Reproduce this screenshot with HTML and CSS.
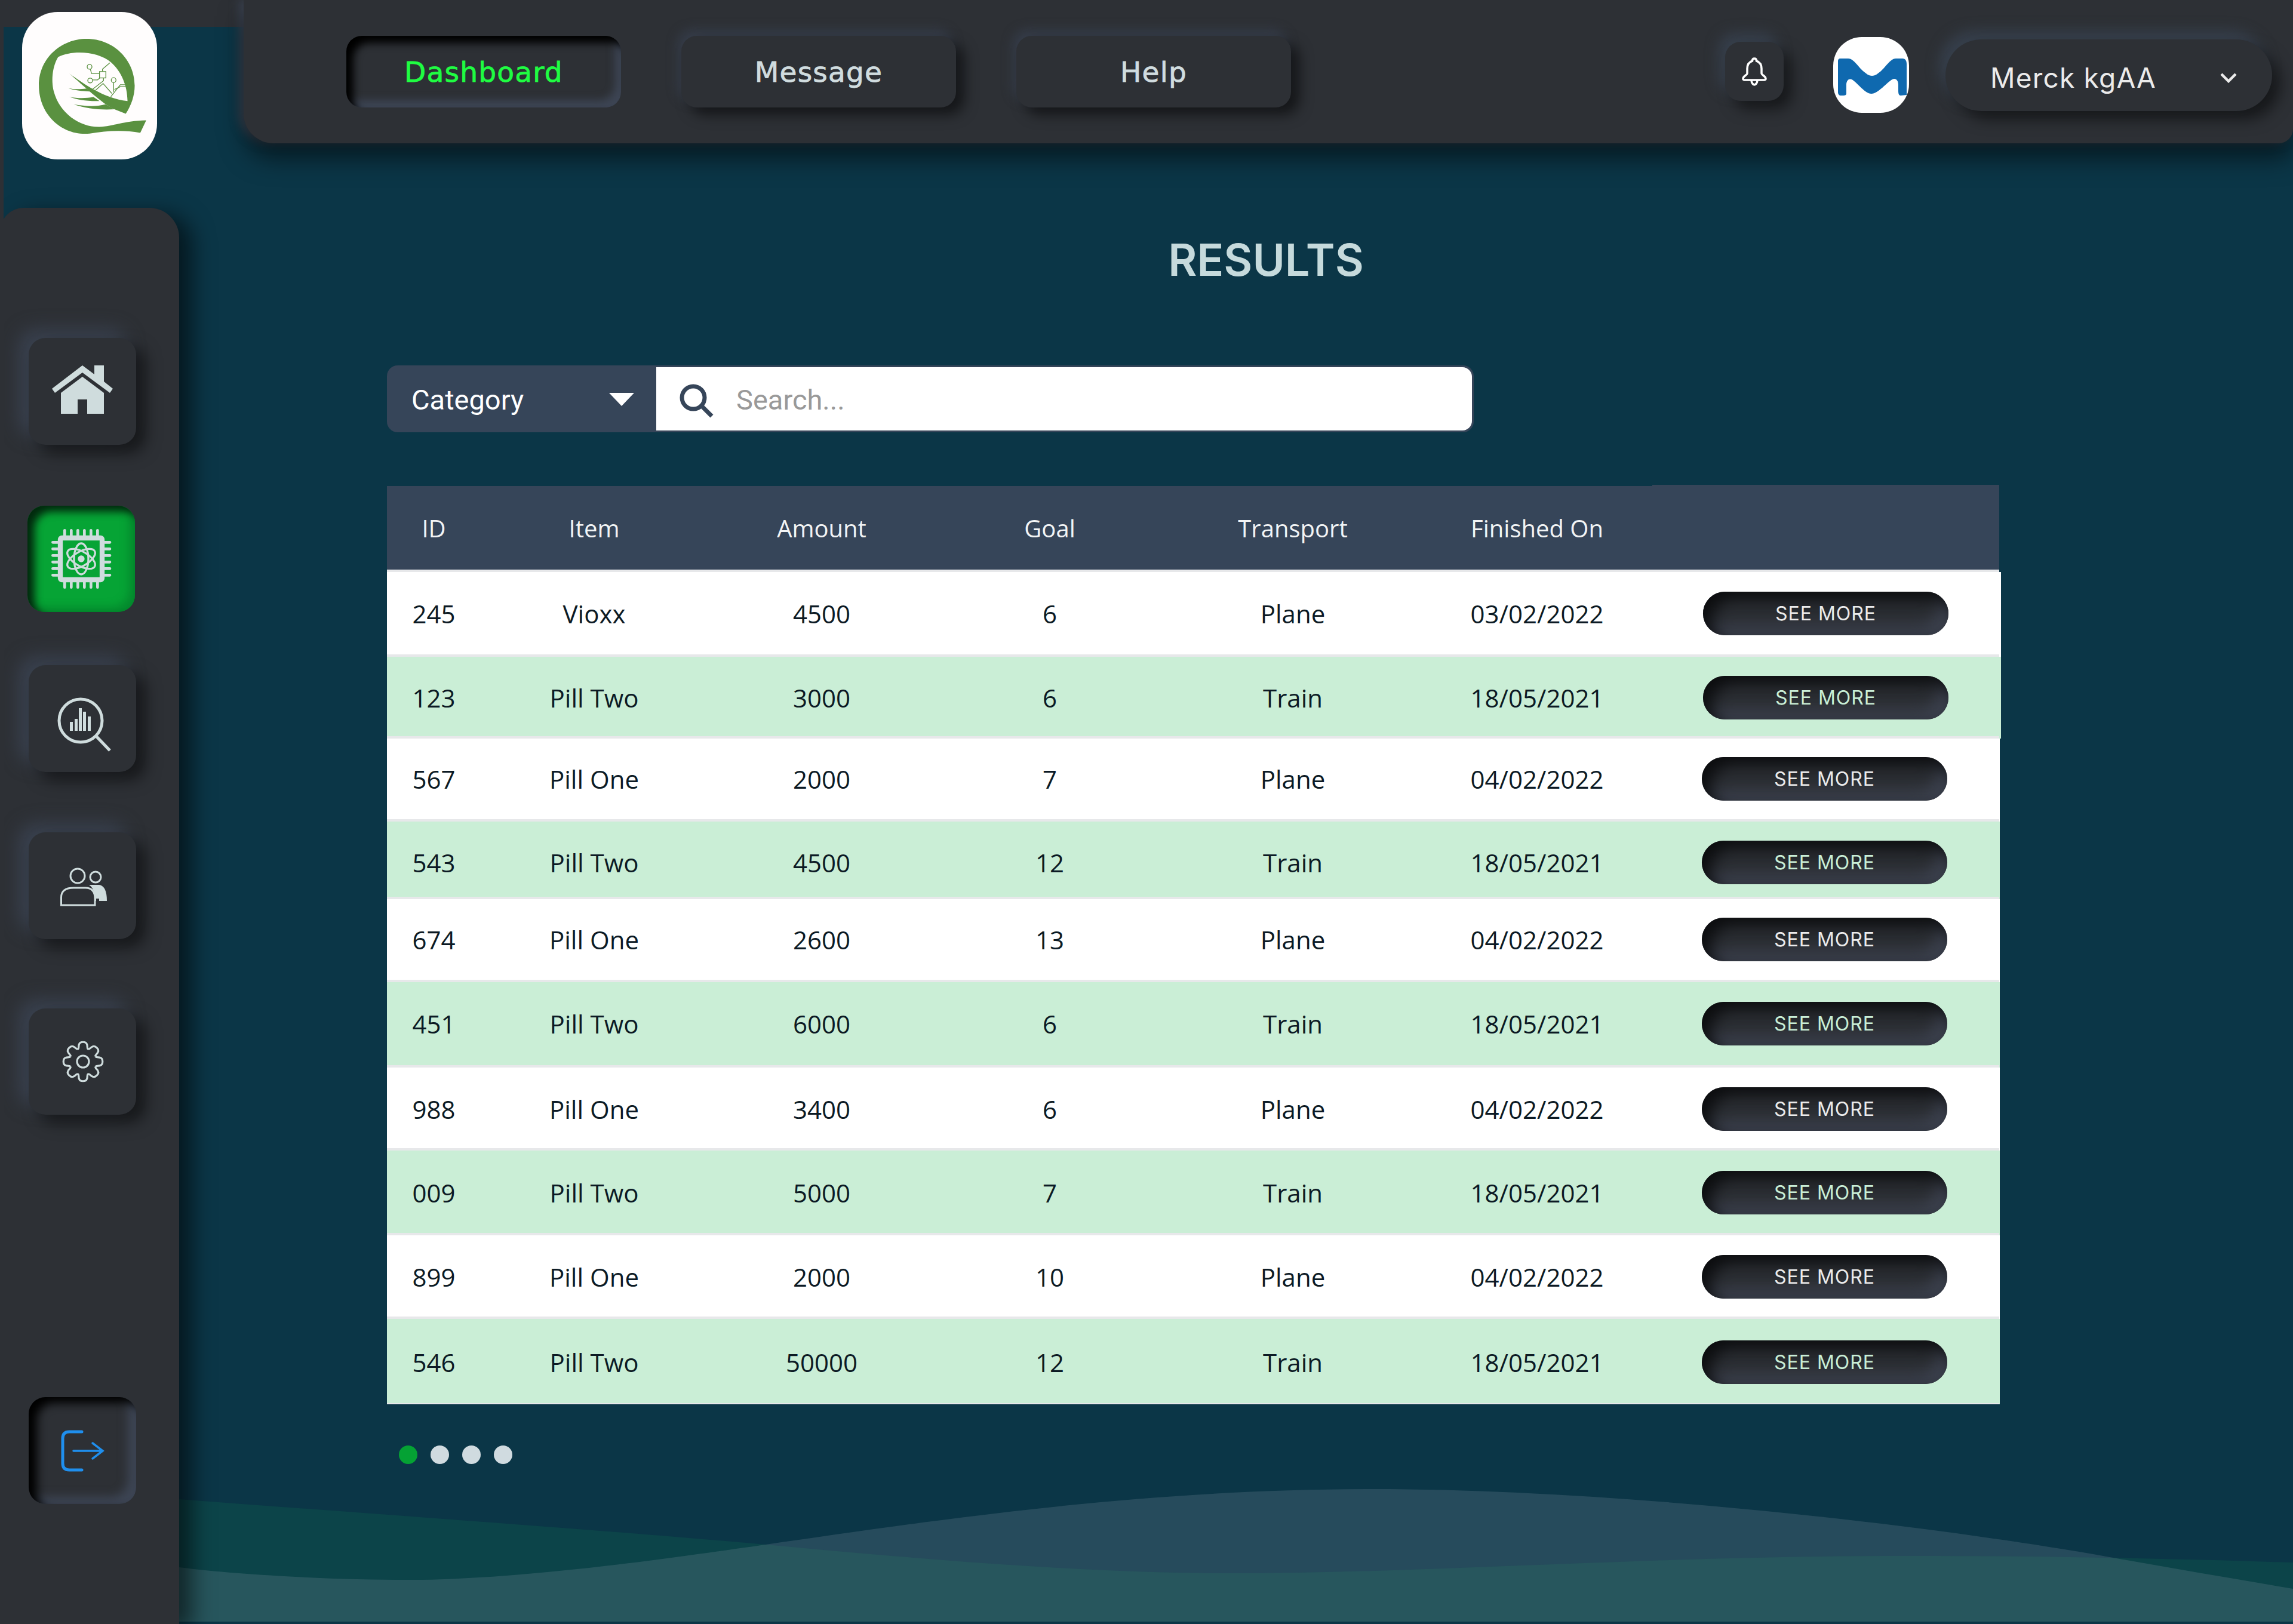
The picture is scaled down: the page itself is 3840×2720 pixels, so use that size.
FILE: index.html
```html
<!DOCTYPE html>
<html lang="en">
<head>
  <meta charset="UTF-8">
  <meta name="viewport" content="width=device-width, initial-scale=1.0">
  <title>Results</title>
  <link rel="stylesheet" href="styles.css">
</head>
<body>
<div class="page">
  <div class="top-strip"></div>

  <!-- background waves -->
  <svg class="waves" viewBox="0 0 3840 2720" width="3840" height="2720">
    <path class="wave-one" d="M300 2511 C640 2537 980 2560 1282 2587 C1500 2607 1800 2635 2060 2635 C2400 2635 2750 2606 3189 2606 C3450 2606 3650 2611 3840 2617 V2716 H300 Z"/>
    <path class="wave-two" d="M300 2625 C400 2638 560 2646 684 2646 C880 2646 1132 2608 1282 2587 C1550 2549 1900 2494 2298 2494 C2750 2494 3300 2565 3539 2609 C3640 2627 3740 2644 3840 2661 V2716 H300 Z"/>
  </svg>

  <div class="left-col">
    <div class="logo">
      <svg viewBox="52 30 676 742" width="226" height="247">
        <path class="logo-fill" d="M675 575 L645 638 C560 622 470 628 390 642 C250 655 135 545 135 400 C135 260 250 165 375 165 C510 165 617 270 617 400 C617 450 600 500 572 542 L515 520 C450 490 360 400 288 340 C360 390 460 465 581 478 C580 400 550 330 500 285 C430 225 300 222 232 257 C205 300 195 370 210 430 C240 540 340 610 440 608 C510 605 560 578 675 575 Z"/>
        <path class="logo-fill" d="M282 413 C310 420 340 420 375 415 L395 430 C350 428 310 425 282 413 Z"/>
        <path class="logo-fill" d="M288 457 C330 465 370 465 410 458 L440 478 C380 480 330 472 288 457 Z"/>
        <path class="logo-fill" d="M310 495 C370 505 420 508 470 495 L515 520 C440 525 370 515 310 495 Z"/>
        <g class="logo-line">
          <rect x="440" y="330" width="32" height="32"/>
          <path d="M455 330 V318 L492 286"/>
          <circle cx="390" cy="306" r="12"/>
          <path d="M394 318 L400 340 H440"/>
          <circle cx="393" cy="375" r="12"/>
          <path d="M405 372 H430 L442 362"/>
          <path d="M460 362 V376 L406 418"/>
          <path d="M420 424 L458 390 L502 440"/>
          <circle cx="511" cy="373" r="12"/>
          <path d="M511 385 V432"/>
          <path d="M497 456 L545 396 H570"/>
          <path d="M515 420 L545 406 H572"/>
        </g>
      </svg>
    </div>

    <nav class="sidebar">
      <a class="side-btn side-home">
        <svg viewBox="88 606 102 99" width="102" height="99">
          <path class="icon-fill" d="M139 612 L159 627 V612 H175 V639 L190 651 L185 658 L139 624 L93 658 L88 651 Z"/>
          <path class="icon-fill" d="M139 631 L175 658 V693 H147 V669 H131 V693 H103 V658 Z"/>
        </svg>
      </a>
      <a class="side-btn side-active">
        <svg viewBox="125 123 330 330" width="110" height="110">
          <g class="chip-pins">
            <path d="M207 145 V172 M240 145 V172 M273 145 V172 M306 145 V172 M339 145 V172 M372 145 V172"/>
            <path d="M207 405 V431 M240 405 V431 M273 405 V431 M306 405 V431 M339 405 V431 M372 405 V431"/>
            <path d="M147 205 H172 M147 238 H172 M147 271 H172 M147 304 H172 M147 337 H172 M147 370 H172"/>
            <path d="M408 205 H434 M408 238 H434 M408 271 H434 M408 304 H434 M408 337 H434 M408 370 H434"/>
          </g>
          <rect class="chip-body" x="185" y="183" width="210" height="210" rx="8"/>
          <g class="chip-atom">
            <ellipse cx="290" cy="288" rx="78" ry="36" transform="rotate(30 290 288)"/>
            <ellipse cx="290" cy="288" rx="78" ry="36" transform="rotate(-30 290 288)"/>
            <ellipse cx="290" cy="288" rx="78" ry="36" transform="rotate(90 290 288)"/>
          </g>
          <circle class="icon-fill" cx="290" cy="288" r="17"/>
        </svg>
      </a>
      <a class="side-btn side-search">
        <svg viewBox="90 1144 96 118" width="96" height="118">
          <circle class="icon-line" cx="135" cy="1206" r="36"/>
          <path class="icon-line" d="M162 1233 L184 1256"/>
          <path class="icon-fill" d="M117 1208 h5 v15 h-5 Z M125 1203 h5 v20 h-5 Z M132 1185 h5 v38 h-5 Z M139 1191 h5 v32 h-5 Z M147 1199 h5 v24 h-5 Z"/>
        </svg>
      </a>
      <a class="side-btn side-users">
        <svg viewBox="96 1440 82 87" width="82" height="87">
          <circle class="icon-thin" cx="129" cy="1467" r="12"/>
          <circle class="icon-thin" cx="159" cy="1469" r="9"/>
          <path class="icon-thin" d="M101.5 1516 V1503 Q101.5 1487 122 1487 H142 Q158 1487 158 1505 V1516 Z"/>
          <path class="icon-fill" d="M148 1482 H165 Q178 1484 178 1509 H165 V1505 H160 V1509 H158 Q158 1488 148 1482 Z"/>
        </svg>
      </a>
      <a class="side-btn side-gear">
        <svg viewBox="-37 -36 72 72" width="72" height="72">
          <defs>
            <path id="lobe" d="M20.5 -8.5 C24 -6 26 -8 29 -6.5 C34 -5 34 5 29 6.5 C26 8 24 6 20.5 8.5"/>
          </defs>
          <g class="gear-line">
            <use href="#lobe"/>
            <use href="#lobe" transform="rotate(45)"/>
            <use href="#lobe" transform="rotate(90)"/>
            <use href="#lobe" transform="rotate(135)"/>
            <use href="#lobe" transform="rotate(180)"/>
            <use href="#lobe" transform="rotate(225)"/>
            <use href="#lobe" transform="rotate(270)"/>
            <use href="#lobe" transform="rotate(315)"/>
            <circle r="10"/>
          </g>
        </svg>
      </a>
      <a class="side-btn side-sunken side-logout">
        <svg viewBox="100 2392 74 72" width="74" height="72">
          <path class="exit-bracket" d="M136 2396 H115 Q104 2396 104 2407 V2449 Q104 2460 115 2460 H136"/>
          <path class="exit-arrow" d="M122 2428 H170 M154 2415 L171 2428 L154 2441"/>
        </svg>
      </a>
    </nav>
  </div>

  <div class="right-col">
    <header class="topbar">
      <div class="tabs">
        <a class="tab tab-active">Dashboard</a>
        <a class="tab">Message</a>
        <a class="tab">Help</a>
      </div>
      <a class="bell">
        <svg viewBox="0 0 44 50" width="44" height="50">
          <path class="bell-line" d="M22 3 C19 3 18.5 5 18.5 7 C13 9 10 14 10 20 V28 C10 31 3 32 3 37 C3 38 4 39 5 39 H39 C40 39 41 38 41 37 C41 32 34 31 34 28 V20 C34 14 31 9 25.5 7 C25.5 5 25 3 22 3 Z"/>
          <path class="bell-line" d="M17 39 C17 44 20 47 22 47 C24 47 27 44 27 39"/>
        </svg>
      </a>
      <div class="avatar">
        <svg viewBox="0 0 127 127" width="127" height="127">
          <path class="merck-m" d="M12 36 H25 C34 36 42 50 50 57 C56 62 60 65 65 65 C70 65 74 62 80 57 C88 50 96 36 105 36 H116 C121 36 123 40 123 45 V97 L113 98 C110 98 109 95 109 90 V80 C109 72 104 68 99 71 C90 76 75 95 64 95 C53 95 40 76 31 71 C27 69 22 72 22 80 V95 C22 97 20 98 17 98 H13 C10 98 8 96 8 92 V40 C8 38 9 36 12 36 Z"/>
        </svg>
      </div>
      <div class="account">
        <span>Merck kgAA</span>
        <svg viewBox="0 0 30 18" width="30" height="18">
          <path class="chevron" d="M3 3 L15 15 L27 3"/>
        </svg>
      </div>
    </header>

    <main class="content">
      <h1 class="title">RESULTS</h1>

      <div class="search-group">
        <div class="category">
          <span>Category</span>
          <i class="caret"></i>
        </div>
        <div class="search-box">
          <svg class="search-icon" viewBox="0 0 58 58" width="58" height="58">
            <circle class="search-line" cx="24" cy="24" r="19"/>
            <path class="search-line" d="M38 38 L55 55"/>
          </svg>
          <span class="placeholder">Search...</span>
        </div>
      </div>

      <table class="results">
        <colgroup>
          <col class="c-id"><col class="c-item"><col class="c-num"><col class="c-num"><col class="c-trans"><col class="c-date"><col class="c-more">
        </colgroup>
        <thead>
          <tr><th>ID</th><th>Item</th><th>Amount</th><th>Goal</th><th>Transport</th><th>Finished On</th><th class="th-more"></th></tr>
        </thead>
        <tbody>
          <tr><td>245</td><td>Vioxx</td><td>4500</td><td>6</td><td>Plane</td><td>03/02/2022</td><td><a class="more">SEE MORE</a></td></tr>
          <tr><td>123</td><td>Pill Two</td><td>3000</td><td>6</td><td>Train</td><td>18/05/2021</td><td><a class="more">SEE MORE</a></td></tr>
          <tr><td>567</td><td>Pill One</td><td>2000</td><td>7</td><td>Plane</td><td>04/02/2022</td><td><a class="more">SEE MORE</a></td></tr>
          <tr><td>543</td><td>Pill Two</td><td>4500</td><td>12</td><td>Train</td><td>18/05/2021</td><td><a class="more">SEE MORE</a></td></tr>
          <tr><td>674</td><td>Pill One</td><td>2600</td><td>13</td><td>Plane</td><td>04/02/2022</td><td><a class="more">SEE MORE</a></td></tr>
          <tr><td>451</td><td>Pill Two</td><td>6000</td><td>6</td><td>Train</td><td>18/05/2021</td><td><a class="more">SEE MORE</a></td></tr>
          <tr><td>988</td><td>Pill One</td><td>3400</td><td>6</td><td>Plane</td><td>04/02/2022</td><td><a class="more">SEE MORE</a></td></tr>
          <tr><td>009</td><td>Pill Two</td><td>5000</td><td>7</td><td>Train</td><td>18/05/2021</td><td><a class="more">SEE MORE</a></td></tr>
          <tr><td>899</td><td>Pill One</td><td>2000</td><td>10</td><td>Plane</td><td>04/02/2022</td><td><a class="more">SEE MORE</a></td></tr>
          <tr><td>546</td><td>Pill Two</td><td>50000</td><td>12</td><td>Train</td><td>18/05/2021</td><td><a class="more">SEE MORE</a></td></tr>
        </tbody>
      </table>

      <div class="dots">
        <i class="dot dot-on"></i><i class="dot"></i><i class="dot"></i><i class="dot"></i>
      </div>
    </main>
  </div>
</div>
</body>
</html>
```

FILE: styles.css
```css
* {
  box-sizing: border-box;
}
body {
  margin: 0;
  background: #0b3647;
  font-family: "Open Sans", sans-serif;
}
.page {
  position: relative;
  width: 3840px;
  height: 2720px;
  overflow: hidden;
  display: grid;
  grid-template-columns: 294px 1fr;
  border-left: 6px solid #2d3035;
}
.top-strip {
  position: absolute;
  left: 0;
  top: 0;
  width: 420px;
  height: 45px;
  background: #2d3035;
}
.waves {
  position: absolute;
  left: -6px;
  top: 0;
}
.wave-one {
  fill: #0c4449;
}
.wave-two {
  fill: rgba(140, 154, 171, 0.21);
}

/* left column */
.left-col {
  position: relative;
  display: flex;
  flex-direction: column;
  height: 2720px;
}
.logo {
  width: 226px;
  height: 247px;
  margin: 20px 0 0 31px;
  border-radius: 60px;
  background: #fffdfd;
  flex: none;
}
.logo svg {
  display: block;
}
.logo-fill {
  fill: #5a9140;
}
.logo-line {
  fill: none;
  stroke: #5a9140;
  stroke-width: 4;
}
.sidebar {
  flex: 1;
  margin: 81px 0 0 -6px;
  padding-top: 218px;
  background: #2d3035;
  border-top-right-radius: 50px;
  border-top-left-radius: 40px;
  box-shadow: 22px 10px 36px rgba(0, 0, 0, 0.55);
  display: flex;
  flex-direction: column;
}
.side-btn {
  width: 180px;
  height: 179px;
  margin-left: 48px;
  border-radius: 28px;
  background: #2d3035;
  box-shadow: 16px 14px 26px rgba(0, 0, 0, 0.5), -16px -14px 30px #3a4250;
  display: flex;
  align-items: center;
  justify-content: center;
  flex: none;
}
.side-active {
  margin-left: 46px;
  margin-top: 102px;
  height: 178px;
  background: #06a435;
  box-shadow: inset 12px 10px 14px rgba(0, 0, 0, 0.75), inset -10px -8px 14px rgba(4, 120, 40, 0.6);
}
.side-search {
  margin-top: 89px;
}
.side-users {
  margin-top: 101px;
}
.side-gear {
  margin-top: 116px;
  height: 178px;
}
.side-sunken {
  box-shadow: inset 14px 10px 16px #000, inset -14px -12px 16px #3d4554;
}
.side-logout {
  margin-top: 473px;
}
.icon-fill {
  fill: #cfdcdd;
}
.icon-line {
  fill: none;
  stroke: #cfdcdd;
  stroke-width: 5;
}
.icon-thin {
  fill: none;
  stroke: #cfdcdd;
  stroke-width: 3;
}
.gear-line {
  fill: none;
  stroke: #cfdcdd;
  stroke-width: 3.2;
}
.chip-pins {
  fill: none;
  stroke: #cfdcdd;
  stroke-width: 14;
  stroke-linecap: round;
}
.chip-body {
  fill: none;
  stroke: #cfdcdd;
  stroke-width: 25;
}
.chip-atom {
  fill: none;
  stroke: #cfdcdd;
  stroke-width: 10;
}
.exit-bracket {
  fill: none;
  stroke: #1f8fee;
  stroke-width: 5;
  stroke-linecap: round;
}
.exit-arrow {
  fill: none;
  stroke: #1f8fee;
  stroke-width: 3.5;
  stroke-linecap: round;
}

/* right column */
.right-col {
  position: relative;
  min-width: 0;
}
.topbar {
  height: 240px;
  margin-left: 108px;
  padding-left: 172px;
  background: #2d3035;
  border-bottom-left-radius: 50px;
  border-bottom-right-radius: 24px;
  box-shadow: 0 26px 40px rgba(0, 0, 0, 0.5), -8px 0 16px #3a4250;
  display: flex;
  align-items: flex-start;
}
.tabs {
  display: flex;
  gap: 101px;
  margin-top: 60px;
}
.tab {
  width: 460px;
  height: 120px;
  border-radius: 26px;
  background: #2d3035;
  box-shadow: 14px 12px 22px rgba(0, 0, 0, 0.55), -6px -10px 18px #363d4a;
  color: #d0dcdf;
  font-family: "DejaVu Sans", sans-serif;
  font-size: 47px;
  letter-spacing: 1.2px;
  -webkit-text-stroke: 0.8px currentColor;
  display: flex;
  align-items: center;
  justify-content: center;
}
.tab-active {
  color: #1ffc42;
  box-shadow: inset 12px 12px 14px #000, inset -10px -12px 14px #3d4554;
}
.bell {
  width: 98px;
  height: 99px;
  margin: 70px 0 0 auto;
  border-radius: 26px;
  background: #2d3035;
  box-shadow: 14px 14px 24px rgba(0, 0, 0, 0.5), -10px -14px 22px #37404d;
  display: flex;
  align-items: center;
  justify-content: center;
}
.bell-line {
  fill: none;
  stroke: #fff;
  stroke-width: 3.5;
}
.avatar {
  width: 127px;
  height: 127px;
  margin: 62px 0 0 83px;
  border-radius: 48px;
  background: #fff;
  overflow: hidden;
}
.avatar svg {
  display: block;
}
.merck-m {
  fill: #0f69af;
}
.account {
  width: 547px;
  height: 120px;
  margin: 66px 35px 0 61px;
  padding: 7px 58px 0 75px;
  border-radius: 60px;
  background: #2d3035;
  box-shadow: 14px 14px 24px rgba(0, 0, 0, 0.5), -10px -14px 22px #37404d;
  color: #ebebeb;
  font-family: Inter, sans-serif;
  font-size: 46px;
  letter-spacing: 1.2px;
  display: flex;
  align-items: center;
  justify-content: space-between;
}
.chevron {
  fill: none;
  stroke: #ebebeb;
  stroke-width: 4.5;
}
.content {
  padding: 0 492px 0 348px;
}
.title {
  margin: 145px 0 0;
  padding-left: 244px;
  height: 100px;
  line-height: 100px;
  text-align: center;
  color: #c6dadc;
  font-family: Inter, sans-serif;
  font-size: 74px;
  font-weight: 600;
}
.search-group {
  width: 1820px;
  height: 112px;
  margin-top: 127px;
  display: flex;
  border-radius: 18px;
  background: #364559;
  padding: 3px 3px 3px 0;
  color: #fff;
  font-family: Roboto, sans-serif;
  font-size: 47px;
}
.category {
  width: 451px;
  padding: 2px 37px 0 41px;
  display: flex;
  align-items: center;
  justify-content: space-between;
}
.caret {
  border-top: 22px solid #fff;
  border-left: 21px solid transparent;
  border-right: 21px solid transparent;
}
.search-box {
  flex: 1;
  background: #fff;
  border-radius: 0 16px 16px 0;
  padding: 2px 0 0 38px;
  display: flex;
  align-items: center;
  gap: 38px;
}
.search-icon {
  margin-top: 4px;
}
.search-line {
  fill: none;
  stroke: #364559;
  stroke-width: 7;
}
.placeholder {
  color: #999;
}
.results {
  width: 2700px;
  margin-top: 90px;
  table-layout: fixed;
  border-collapse: separate;
  border-spacing: 0;
  font-size: 42px;
  color: #0c1a24;
}
.c-id { width: 157px; }
.c-item { width: 380px; }
.c-num { width: 382px; }
.c-trans { width: 432px; }
.c-date { width: 386px; }
.c-more { width: 581px; }
.results th {
  height: 144px;
  padding: 0;
  background: #364559;
  border-bottom: 4px solid #e7e8ea;
  color: #f2f4f5;
  font-size: 40px;
  font-weight: 400;
  text-align: center;
}
.results .th-more {
  box-shadow: 0 -2px 0 #364559;
}
.results td {
  padding: 0;
  text-align: center;
  background: #fff;
  border-bottom: 4px solid #e7e8ea;
}
.results tbody tr:nth-child(even) td {
  background: #caeed6;
}
.results tbody tr:nth-child(1) td { height: 142px; }
.results tbody tr:nth-child(2) td { height: 137px; padding-top: 4px; }
.results tbody tr:nth-child(3) td { height: 139px; }
.results tbody tr:nth-child(4) td { height: 130px; padding-top: 11px; }
.results tbody tr:nth-child(5) td { height: 139px; }
.results tbody tr:nth-child(6) td { height: 143px; }
.results tbody tr:nth-child(7) td { height: 139px; padding-top: 3px; }
.results tbody tr:nth-child(8) td { height: 142px; padding-top: 3px; }
.results tbody tr:nth-child(9) td { height: 140px; padding-top: 3px; }
.results tbody tr:nth-child(10) td { height: 143px; padding-top: 3px; border-bottom-width: 2px; }
/* the button column sits a little off the rest of the table */
.results tbody td:last-child {
  padding-right: 4px;
  box-shadow: 1px 0 0 #fff;
}
.results tbody tr:nth-child(even) td:last-child {
  box-shadow: 1px 0 0 #caeed6;
}
.results tbody tr:nth-child(1) td:last-child {
  padding-right: 0;
  box-shadow: 3px 0 0 #fff;
}
.results tbody tr:nth-child(2) td:last-child {
  padding-right: 0;
  box-shadow: 3px 0 0 #caeed6;
}
.more {
  display: inline-flex;
  width: 411px;
  height: 73px;
  vertical-align: middle;
  align-items: center;
  justify-content: center;
  border-radius: 37px;
  background: #2b2e33;
  box-shadow: inset 14px 14px 26px #0c0d0f, inset -14px -16px 26px #3c414e;
  color: #ebebeb;
  font-family: Inter, sans-serif;
  font-size: 32px;
  letter-spacing: 1px;
}
.results tbody tr:nth-child(even) .more {
  color: #c9eed6;
}
.dots {
  display: flex;
  gap: 22px;
  margin: 69px 0 0 20px;
}
.dot {
  width: 31px;
  height: 31px;
  border-radius: 50%;
  background: #d0dbe0;
}
.dot-on {
  background: #05a234;
}
```
